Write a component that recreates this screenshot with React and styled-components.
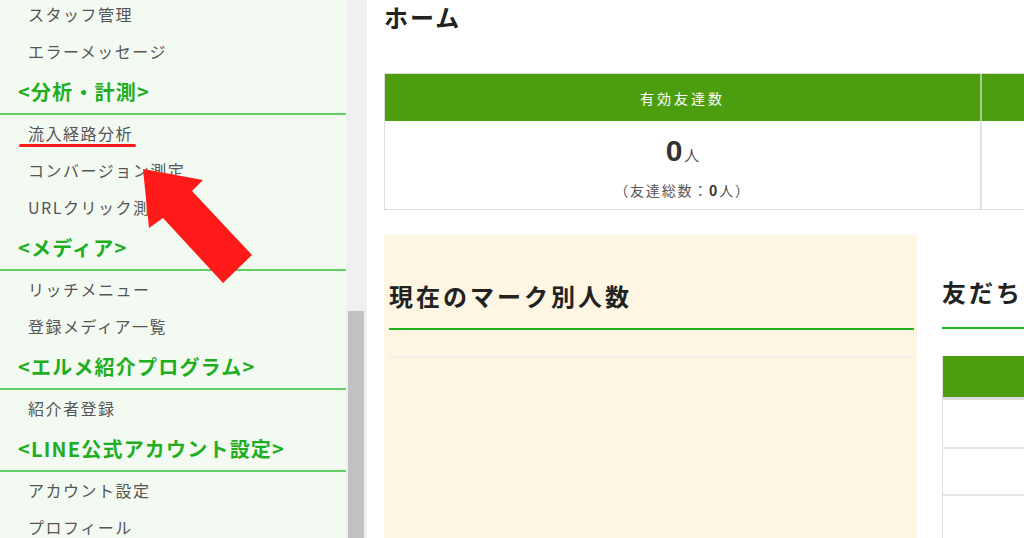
import React from "react";
import styled, { createGlobalStyle } from "styled-components";

const GlobalStyle = createGlobalStyle`
  html, body {
    margin: 0;
    padding: 0;
    overflow: hidden;
    background: #fff;
  }
  body {
    font-family: "Noto Sans CJK JP", "Noto Sans", sans-serif;
    color: #333;
  }
`;

const Page = styled.div`
  position: relative;
  display: flex;
  width: 1024px;
  height: 538px;
  overflow: hidden;
`;

const Sidebar = styled.nav`
  flex: 0 0 346px;
  background-color: #f3faf2;
  overflow: hidden;
`;

const NavList = styled.ul`
  list-style: none;
  margin: -4px 0 0;
  padding: 0;
`;

const NavItem = styled.li`
  height: 37px;
  line-height: 37px;
  padding-left: 28px;
  font-size: 16px;
  letter-spacing: 1.5px;
  color: #555;
  white-space: nowrap;
`;

const NavHeading = styled.li`
  height: 43px;
  line-height: 43px;
  padding-left: 18px;
  font-size: 20px;
  font-weight: bold;
  letter-spacing: 1.2px;
  color: #1fae1f;
  border-bottom: 2px solid #64d064;
  white-space: nowrap;
`;

const Scrollbar = styled.div`
  flex: 0 0 21px;
  display: flex;
  flex-direction: column;
  padding-top: 311px;
  background-color: #f0f0f0;
  box-sizing: border-box;
`;

const Thumb = styled.div`
  flex: 1;
  margin: 0 3px 0 2px;
  background-color: #c1c1c1;
`;

const Main = styled.main`
  flex: 1;
  min-width: 0;
  padding: 2px 0 0 17px;
  overflow: hidden;
`;

const PageTitle = styled.h1`
  margin: 0;
  font-size: 24px;
  line-height: 30px;
  letter-spacing: 2px;
  font-weight: bold;
  color: #222;
`;

const StatsTable = styled.div`
  display: grid;
  grid-template-columns: 595px 595px;
  grid-template-rows: 47px 88px;
  width: 1190px;
  margin-top: 41px;
  border: 1px solid #dcdcdc;
`;

const HeadCell = styled.div`
  display: flex;
  align-items: center;
  justify-content: center;
  background-color: #4d9e0f;
  color: #fff;
  font-size: 14px;
  letter-spacing: 3px;
  border-left: ${(p) => (p.$first ? "none" : "2px solid #a9cf93")};
`;

const BodyCell = styled.div`
  display: flex;
  flex-direction: column;
  align-items: center;
  padding-top: 12px;
  box-sizing: border-box;
  border-left: ${(p) => (p.$first ? "none" : "2px solid #e3e3e3")};
`;

const BigCount = styled.div`
  font-family: "Liberation Sans", "Noto Sans CJK JP", sans-serif;
  font-size: 30px;
  line-height: 36px;
  font-weight: bold;
  color: #333;

  small {
    font-family: "Noto Sans CJK JP", sans-serif;
    font-size: 15px;
    font-weight: normal;
    color: #555;
    margin-left: 2px;
  }
`;

const SubCount = styled.div`
  margin-top: 5px;
  font-size: 14px;
  line-height: 24px;
  letter-spacing: 1.8px;
  color: #555;

  b {
    color: #333;
  }
`;

const LowerRow = styled.div`
  display: flex;
  gap: 25px;
  margin-top: 25px;
`;

const Card = styled.section`
  flex: 0 0 533px;
  height: 320px;
  background-color: #fcf6e3;
  padding: 0 3px 0 5px;
  box-sizing: border-box;
`;

const SectionTitle = styled.h2`
  margin: 0;
  padding: ${(p) => p.$pad};
  font-size: 24px;
  line-height: 34px;
  letter-spacing: 3px;
  font-weight: bold;
  color: #222;
  border-bottom: 2px solid #1fb31f;
  white-space: nowrap;
`;

const Divider = styled.hr`
  margin: 26px 0 0;
  border: none;
  border-top: 2px solid #efefea;
`;

const SideColumn = styled.section`
  flex: 1;
  min-width: 0;
`;

const FriendTable = styled.div`
  margin-top: 27px;
  width: 400px;
  border-left: 1px solid #dcdcdc;
`;

const FriendHead = styled.div`
  height: 44px;
  background-color: #4d9e0f;
  border-bottom: 3px solid #dedede;
  box-sizing: border-box;
`;

const FriendRow = styled.div`
  height: ${(p) => p.$h}px;
  border-bottom: 2px solid #e6e6e6;
  box-sizing: border-box;
`;

const Marker = styled.div`
  position: absolute;
  left: 19px;
  top: 144px;
  width: 117px;
  height: 3px;
  border-radius: 2px;
  background-color: #ff1a1a;
`;

const Arrow = styled.svg`
  position: absolute;
  left: 0;
  top: 0;
  pointer-events: none;
`;

const App = () => {
  return (
    <>
      <GlobalStyle />
      <Page>
        <Sidebar>
          <NavList>
            <NavItem>スタッフ管理</NavItem>
            <NavItem>エラーメッセージ</NavItem>
            <NavHeading>&lt;分析・計測&gt;</NavHeading>
            <NavItem>流入経路分析</NavItem>
            <NavItem>コンバージョン測定</NavItem>
            <NavItem>URLクリック測定</NavItem>
            <NavHeading>&lt;メディア&gt;</NavHeading>
            <NavItem>リッチメニュー</NavItem>
            <NavItem>登録メディア一覧</NavItem>
            <NavHeading>&lt;エルメ紹介プログラム&gt;</NavHeading>
            <NavItem>紹介者登録</NavItem>
            <NavHeading>&lt;LINE公式アカウント設定&gt;</NavHeading>
            <NavItem>アカウント設定</NavItem>
            <NavItem>プロフィール</NavItem>
          </NavList>
        </Sidebar>
        <Scrollbar>
          <Thumb />
        </Scrollbar>
        <Main>
          <PageTitle>ホーム</PageTitle>
          <StatsTable>
            <HeadCell $first>有効友達数</HeadCell>
            <HeadCell />
            <BodyCell $first>
              <BigCount>
                0<small>人</small>
              </BigCount>
              <SubCount>
                （友達総数：<b>0</b>人）
              </SubCount>
            </BodyCell>
            <BodyCell />
          </StatsTable>
          <LowerRow>
            <Card>
              <SectionTitle $pad="44px 0 15px">現在のマーク別人数</SectionTitle>
              <Divider />
            </Card>
            <SideColumn>
              <SectionTitle $pad="40px 0 18px">友だち</SectionTitle>
              <FriendTable>
                <FriendHead />
                <FriendRow $h={49} />
                <FriendRow $h={47} />
                <FriendRow $h={60} />
              </FriendTable>
            </SideColumn>
          </LowerRow>
        </Main>
        <Marker />
        <Arrow width="1024" height="538" viewBox="0 0 1024 538">
          <polygon
            points="143,169 203,180 192,191 252,255 223,283 163,218 149,228"
            fill="#ff1a1a"
          />
        </Arrow>
      </Page>
    </>
  );
};

export default App;
